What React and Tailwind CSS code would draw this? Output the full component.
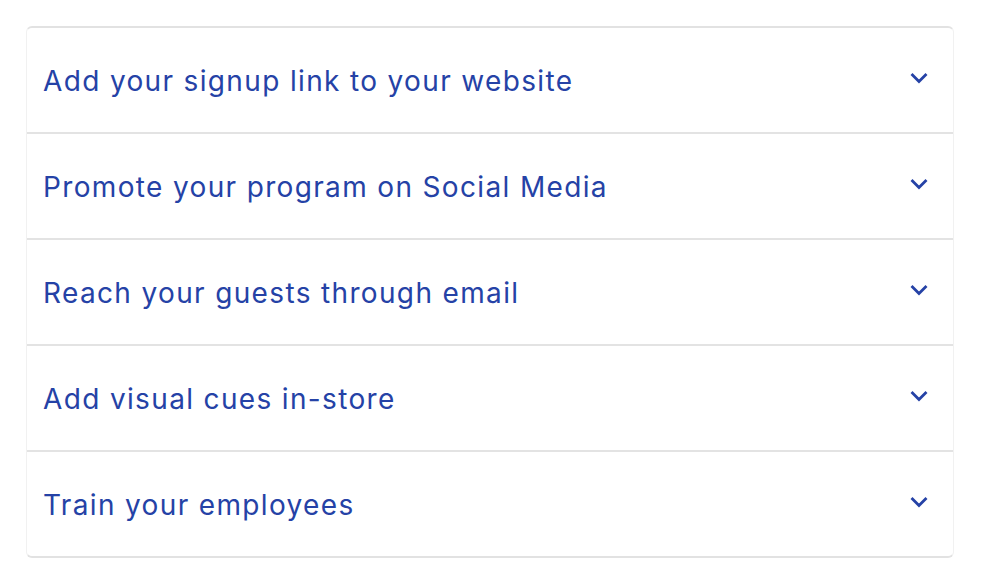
import React from 'react';

const items = [
  'Add your signup link to your website',
  'Promote your program on Social Media',
  'Reach your guests through email',
  'Add visual cues in-store',
  'Train your employees',
];

function Chevron() {
  return (
    <svg width="18" height="11" viewBox="0 0 18 11" fill="none" className="shrink-0 -mt-[3px]">
      <path d="M2.5 2l6.5 6.5 6.5-6.5" stroke="#2542a6" strokeWidth="2.8" strokeLinecap="square" />
    </svg>
  );
}

export default function App() {
  return (
    <div className="w-[1002px] h-[586px] bg-white pt-[26px] pl-[26px]" style={{ fontFamily: 'Inter, "Noto Sans", sans-serif' }}>
      <div className="w-[928px] rounded-[6px] border-y-2 border-x border-y-[#e2e2e2] border-x-[#f1f1f1] bg-white">
        {items.map((label, i) => (
          <div
            key={i}
            className={`flex items-center justify-between pl-[16px] pr-[25px] ${i < items.length - 1 ? 'h-[106px] border-b-2 border-[#e3e3e3]' : 'h-[104px]'}`}
          >
            <span className="text-[28px] tracking-[1.35px] text-[#2542a6] pt-[2px]">{label}</span>
            <Chevron />
          </div>
        ))}
      </div>
    </div>
  );
}
